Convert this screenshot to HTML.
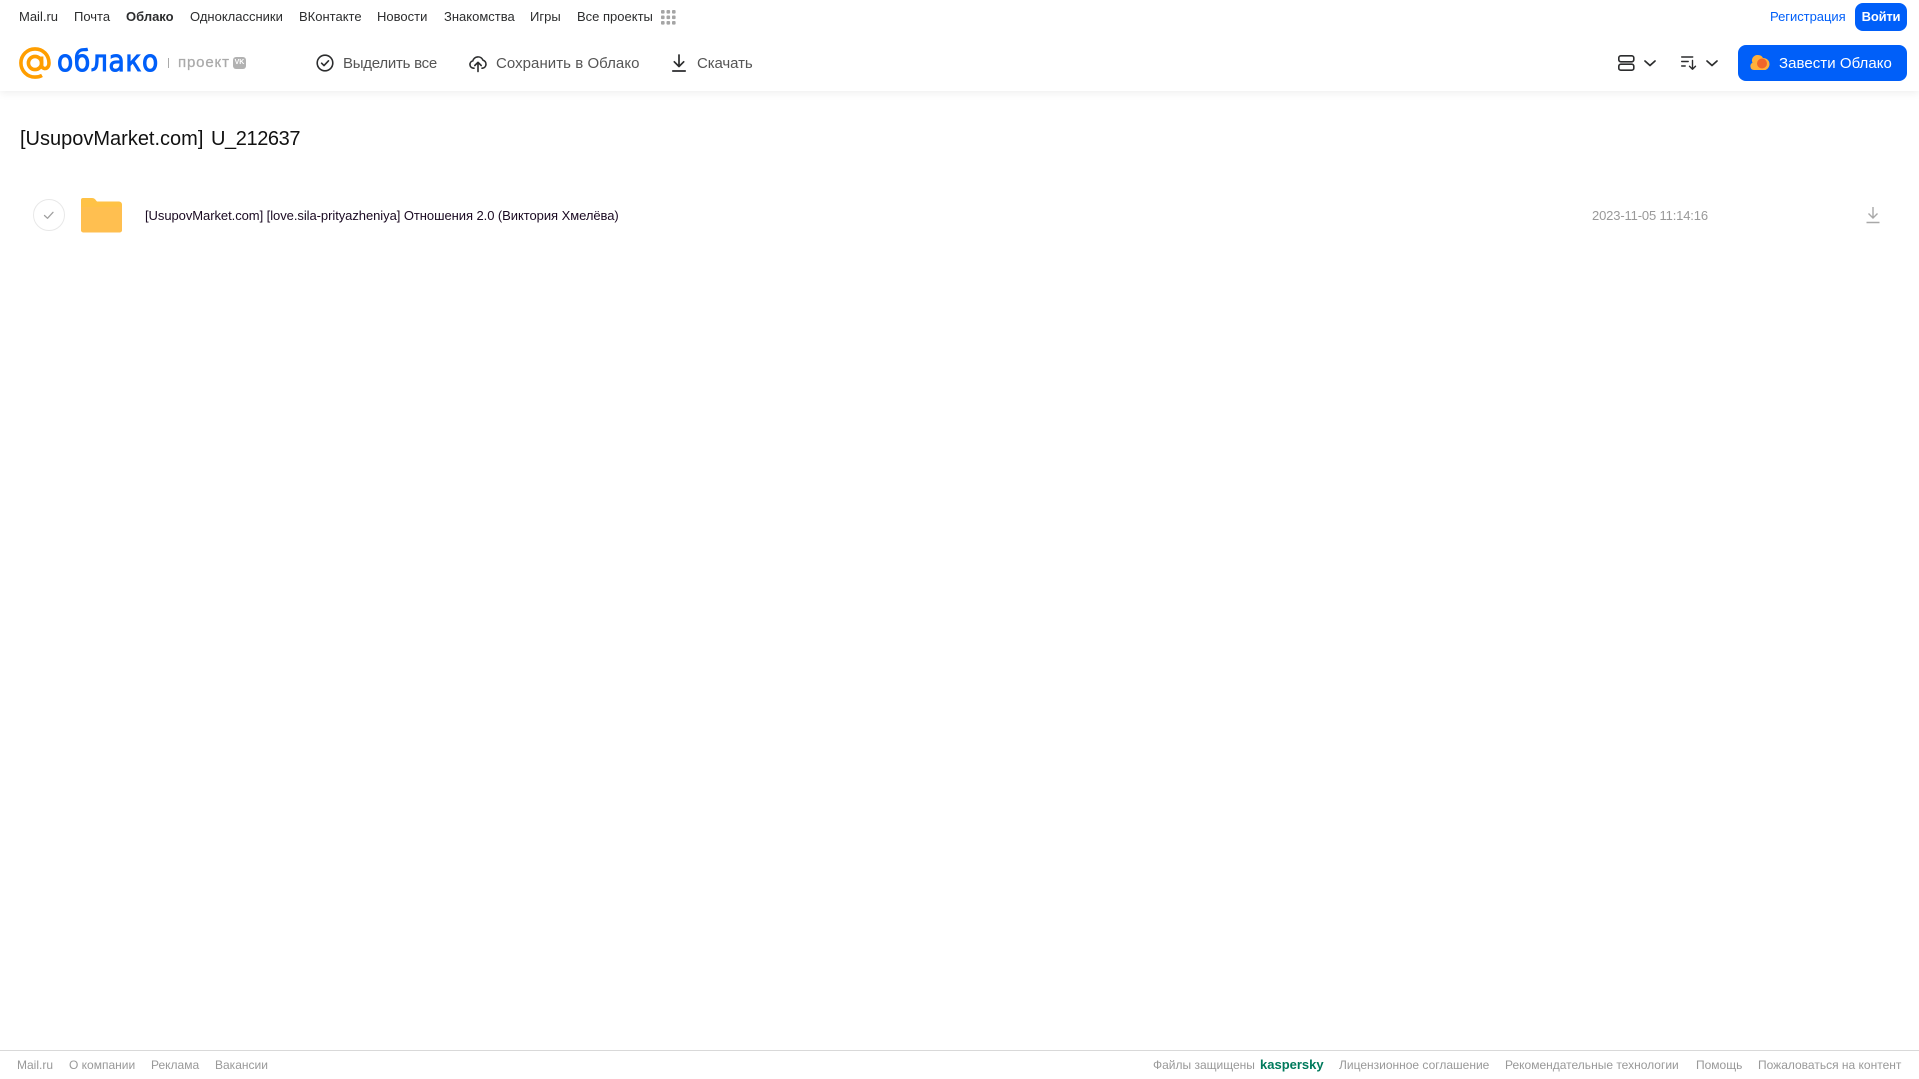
<!DOCTYPE html>
<html lang="ru"><head><meta charset="utf-8"><title>Облако</title>
<style>
html,body{margin:0;padding:0;background:#fff;width:1919px;height:1079px;overflow:hidden;font-family:"Liberation Sans",Arial,sans-serif}
.t{position:absolute;white-space:nowrap;line-height:16px}
.n{font-size:13px;top:9px;color:#2c2d2e}
.a{font-size:15px;top:56px;color:#555;line-height:16px}
.f{font-size:12px;top:1057px;color:#999}
svg{position:absolute;overflow:visible}
</style></head><body>
<div style="position:absolute;left:0;top:0;width:1919px;height:91px;background:#fff;box-shadow:0 2px 8px rgba(0,0,0,.07)"></div>
<div class="t n" style="left:19px">Mail.ru</div>
<div class="t n" style="left:74px">Почта</div>
<div class="t n" style="left:126px;font-weight:bold">Облако</div>
<div class="t n" style="left:190px">Одноклассники</div>
<div class="t n" style="left:299px">ВКонтакте</div>
<div class="t n" style="left:377px">Новости</div>
<div class="t n" style="left:444px">Знакомства</div>
<div class="t n" style="left:530px">Игры</div>
<div class="t n" style="left:577px">Все проекты</div>
<svg style="left:661px;top:10px" width="15" height="15" fill="#a5a5a5"><rect x="0" y="0" width="3.6" height="3.6" rx="1"/><rect x="5.5" y="0" width="3.6" height="3.6" rx="1"/><rect x="11" y="0" width="3.6" height="3.6" rx="1"/><rect x="0" y="5.5" width="3.6" height="3.6" rx="1"/><rect x="5.5" y="5.5" width="3.6" height="3.6" rx="1"/><rect x="11" y="5.5" width="3.6" height="3.6" rx="1"/><rect x="0" y="11" width="3.6" height="3.6" rx="1"/><rect x="5.5" y="11" width="3.6" height="3.6" rx="1"/><rect x="11" y="11" width="3.6" height="3.6" rx="1"/></svg>
<div class="t n" style="left:1770px;color:#005ff9;letter-spacing:-.03px">Регистрация</div>
<div class="t" style="left:1855px;top:3px;width:52px;height:28px;line-height:28px;background:#005ff9;border-radius:8px;color:#fff;font-size:13px;font-weight:bold;letter-spacing:-.2px;text-align:center">Войти</div>

<svg style="left:19px;top:47px" width="33" height="33" viewBox="0 0 33 33" fill="none" stroke="#ff9e00" stroke-width="3.6"><circle cx="16" cy="16" r="6.6"/><path d="M22.600 9.500V18c0 5 7.400 5 7.400-2C30 8 24 1.900 16 1.900A14.100 14.100 0 0 0 16 30.100c2.800 0 5-.6 7-1.700"/></svg>
<div class="t" style="left:57px;top:44px;font-size:29.500px;line-height:34px;font-weight:normal;-webkit-text-stroke:1px #005ff9;color:#005ff9;letter-spacing:.7px;font-family:'DejaVu Sans',sans-serif;transform-origin:0 50%;transform:scaleX(.9)">облако</div>
<div style="position:absolute;left:168px;top:58px;width:1px;height:10px;background:#aaa"></div>
<div class="t" style="left:178px;top:55px;font-size:15px;color:#aaa;letter-spacing:.85px;-webkit-text-stroke:.25px #aaa">проект</div>
<div class="t" style="left:233px;top:57px;width:13px;height:12px;line-height:12px;background:#b2b2b2;border-radius:3px;color:#fff;font-size:7px;font-weight:bold;text-align:center">VK</div>

<svg style="left:316px;top:54px" width="18" height="18" fill="none" stroke="#2c2d2e" stroke-width="1.600"><circle cx="9" cy="9" r="7.800"/><path d="M5.600 9.200l2.400 2.400 4.500-4.800" stroke-linecap="round" stroke-linejoin="round"/></svg>
<div class="t a" style="left:343px;letter-spacing:-.25px">Выделить все</div>
<svg style="left:469px;top:54px" width="18" height="18" fill="none" stroke="#2c2d2e" stroke-width="1.600" stroke-linecap="round" stroke-linejoin="round"><path d="M5 14.200H4.500A3.700 3.700 0 0 1 3.800 6.900 5.400 5.400 0 0 1 14 6.200 4.100 4.100 0 0 1 13.500 14.200H13"/><path d="M9 17.500V8.500M5.800 11.500L9 8.300l3.200 3.200"/></svg>
<div class="t a" style="left:496px;letter-spacing:.05px">Сохранить в Облако</div>
<svg style="left:671px;top:54px" width="16" height="18" fill="none" stroke="#2c2d2e" stroke-width="1.700" stroke-linecap="round" stroke-linejoin="round"><path d="M8 1v11M3.300 7.800L8 12.500l4.700-4.700M1.800 17h12.400"/></svg>
<div class="t a" style="left:697px;letter-spacing:-.1px">Скачать</div>

<svg style="left:1618px;top:55px" width="17" height="16" fill="none" stroke="#2c2d2e" stroke-width="1.600"><rect x=".8" y=".8" width="15" height="6" rx="2"/><rect x=".8" y="9.200" width="15" height="6" rx="2"/></svg>
<svg style="left:1644px;top:60px" width="12" height="7" fill="none" stroke="#2c2d2e" stroke-width="1.700" stroke-linecap="round" stroke-linejoin="round"><path d="M1 1l5 4.500L11 1"/></svg>
<svg style="left:1681px;top:56px" width="16" height="14" fill="none" stroke="#2c2d2e" stroke-width="1.400" stroke-linecap="round" stroke-linejoin="round"><path d="M.7 1h11M.7 5.500h6.500M.7 10h3.500M11.500 4.500v8.500M8.500 10.200l3 3 3-3"/></svg>
<svg style="left:1706px;top:60px" width="12" height="7" fill="none" stroke="#2c2d2e" stroke-width="1.700" stroke-linecap="round" stroke-linejoin="round"><path d="M1 1l5 4.500L11 1"/></svg>
<div style="position:absolute;left:1738px;top:45px;width:169px;height:36px;background:#005ff9;border-radius:8px"></div>
<svg style="left:1750px;top:54px" width="20" height="17"><path d="M4 16A3.800 3.800 0 0 1 2.500 8.800 5.500 5.500 0 0 1 8 1a5.500 5.500 0 0 1 5 3 6.200 6.200 0 0 1 2.500 12z" fill="#ffb03a"/><circle cx="12" cy="9.500" r="5" fill="#f0662a"/></svg>
<div class="t" style="left:1779px;top:56px;font-size:15px;color:#fff;letter-spacing:.05px">Завести Облако</div>

<div class="t" style="left:20px;top:126px;font-size:20px;line-height:26px;color:#111">[UsupovMarket.com]</div>
<div class="t" style="left:211px;top:126px;font-size:20px;line-height:26px;color:#111;letter-spacing:-.4px">U_212637</div>
<svg style="left:33px;top:199px" width="32" height="32" fill="none"><circle cx="16" cy="16" r="15.500" stroke="#e8e8e8"/><path d="M11.500 16.500l3 2.800 5.500-6" stroke="#a0a0a0" stroke-width="1.300" stroke-linecap="round" stroke-linejoin="round"/></svg>
<svg style="left:81px;top:198px" width="41" height="35"><path d="M2 0h9c3 0 3.500 2 5 3.500H38a3 3 0 0 1 3 3V32a2.500 2.500 0 0 1-2.500 2.500H2.500A2.500 2.500 0 0 1 0 32V2a2 2 0 0 1 2-2z" fill="#ffc246"/><path d="M0 9h41v23a2.500 2.500 0 0 1-2.500 2.500H2.500A2.500 2.500 0 0 1 0 32z" fill="#ffbf50"/></svg>
<div class="t" style="left:145px;top:208px;font-size:13px;letter-spacing:-.06px;color:#1a0a22">[UsupovMarket.com] [love.sila-prityazheniya] Отношения 2.0 (Виктория Хмелёва)</div>
<div class="t" style="left:1592px;top:208px;font-size:13px;letter-spacing:-.15px;color:#999">2023-11-05 11:14:16</div>
<svg style="left:1866px;top:206px" width="14" height="18" fill="none" stroke="#a8a8a8" stroke-width="1.400"><path d="M7 1v11M2.500 7.500L7 12l4.500-4.500M.5 16.500h13"/></svg>

<div style="position:absolute;left:0;top:1050px;width:1919px;height:1px;background:#d9d9d9"></div>
<div class="t f" style="left:17px">Mail.ru</div>
<div class="t f" style="left:69px">О компании</div>
<div class="t f" style="left:151px">Реклама</div>
<div class="t f" style="left:215px">Вакансии</div>
<div class="t f" style="left:1153px">Файлы защищены</div>
<div class="t f" style="left:1260px;color:#007a5c;font-weight:bold;font-size:13px">kaspersky</div>
<div class="t f" style="left:1339px">Лицензионное соглашение</div>
<div class="t f" style="left:1505px">Рекомендательные технологии</div>
<div class="t f" style="left:1696px">Помощь</div>
<div class="t f" style="left:1758px">Пожаловаться на контент</div>
</body></html>
